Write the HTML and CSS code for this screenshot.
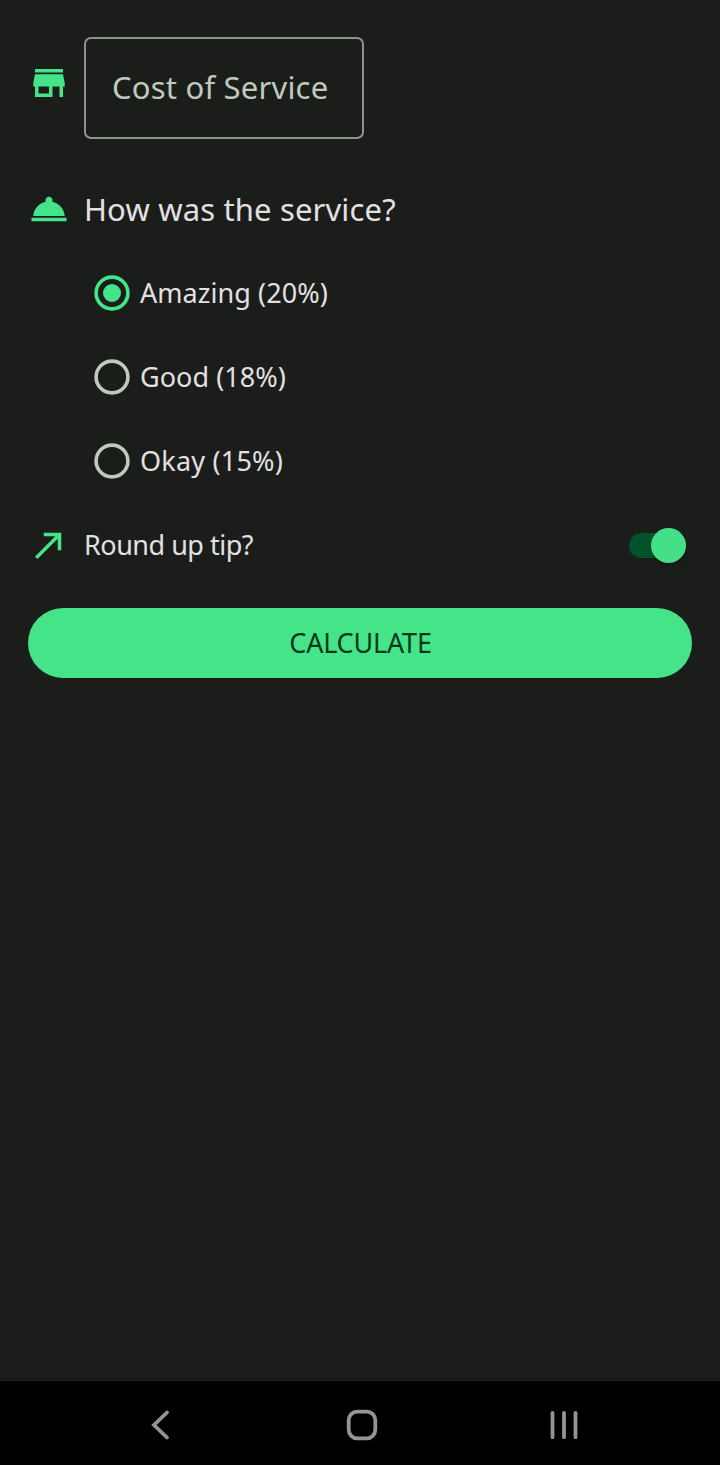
FILE: index.html
```
<!DOCTYPE html>
<html lang="en">
<head>
<meta charset="utf-8">
<title>Tip Calculator</title>
<link rel="stylesheet" href="styles.css">
</head>
<body>
<main class="form">
  <div class="row cost">
    <svg class="icon store" viewBox="0 0 24 24"><path d="M20 4H4v2h16V4zm1 10v-2l-1-5H4l-1 5v2h1v6h10v-6h4v6h2v-6h1zm-9 4H6v-4h6v4z"/></svg>
    <div class="field"><span class="hint">Cost of Service</span></div>
  </div>
  <div class="row question">
    <svg class="icon" viewBox="0 0 24 24"><path d="M2 17h20v2H2zm11.84-9.21c.1-.24.16-.51.16-.79 0-1.1-.9-2-2-2s-2 .9-2 2c0 .28.06.55.16.79C6.25 8.6 3.27 11.93 3 16h18c-.27-4.07-3.25-7.4-7.16-8.21z"/></svg>
    <span class="title">How was the service?</span>
  </div>
  <div class="options">
    <div class="option">
      <svg class="radio checked" viewBox="0 0 36 36"><circle class="ring" cx="18" cy="18" r="15.900"/><circle class="dot" cx="18" cy="18" r="9"/></svg>
      <span class="label">Amazing (20%)</span>
    </div>
    <div class="option">
      <svg class="radio" viewBox="0 0 36 36"><circle class="ring" cx="18" cy="18" r="15.900"/></svg>
      <span class="label">Good (18%)</span>
    </div>
    <div class="option">
      <svg class="radio" viewBox="0 0 36 36"><circle class="ring" cx="18" cy="18" r="15.900"/></svg>
      <span class="label okay">Okay (15%)</span>
    </div>
  </div>
  <div class="row round">
    <svg class="icon" viewBox="0 0 24 24"><path d="M9 5v2h6.59L4 18.59 5.41 20 17 8.41V15h2V5z"/></svg>
    <span class="label tip">Round up tip?</span>
    <span class="switch"><span class="thumb"></span></span>
  </div>
  <div class="button"><span class="caption">CALCULATE</span></div>
</main>
<nav class="navbar">
  <svg class="back" viewBox="0 0 24 36"><path d="M18 5.500 5 18 18 30.500"/></svg>
  <svg class="home" viewBox="0 0 36 36"><rect x="4.700" y="4.700" width="26.600" height="26.600" rx="8.500"/></svg>
  <svg class="recents" viewBox="0 0 36 36"><path d="M6.500 5.800v24.400M18 5.800v24.400M29.500 5.800v24.400"/></svg>
</nav>
</body>
</html>
```

FILE: styles.css
```
* { box-sizing: border-box; }
body {
  margin: 0;
  min-height: 1465px;
  display: flex;
  flex-direction: column;
  background: #1b1d1a;
  color: #e3e0e3;
  font-family: "Noto Sans", sans-serif;
}
.form { flex: 1; padding: 37px 28px 0; }
.row { display: flex; align-items: center; gap: 14px; }
.icon { width: 42px; height: 42px; flex: none; fill: #45e489; }
.cost { height: 102px; align-items: flex-start; }
.store { margin-top: 25px; }
.field {
  width: 280px;
  height: 102px;
  display: flex;
  align-items: center;
  padding: 0 0 2px 26px;
  border: 2px solid #8b938a;
  border-radius: 7px;
}
.hint, .title, .label, .caption { white-space: nowrap; line-height: 42px; }
.hint { color: #c0c9be; font-size: 31px; letter-spacing: .2px; }
.question { height: 42px; margin-top: 49px; }
.title { font-size: 31px; letter-spacing: .15px; }
.options { margin: 21px 0 0 66px; }
.option { height: 84px; display: flex; align-items: center; gap: 10px; }
.radio { width: 36px; height: 36px; flex: none; }
.ring { fill: none; stroke: #c0c9be; stroke-width: 3.6; }
.checked .ring { stroke: #45e489; }
.dot { fill: #45e489; }
.label { font-size: 27px; letter-spacing: .05px; }
.okay { letter-spacing: .2px; }
.tip { letter-spacing: -.5px; }
.round { height: 84px; }
.switch {
  width: 57px;
  height: 25px;
  display: flex;
  align-items: center;
  justify-content: flex-end;
  margin: 0 6px 0 auto;
  border-radius: 13px;
  background: #00532a;
}
.thumb {
  width: 35px;
  height: 35px;
  flex: none;
  border-radius: 50%;
  background: #45df87;
  box-shadow: 0 2px 3px rgba(0, 0, 0, .25);
}
.button {
  height: 70px;
  margin-top: 21px;
  display: flex;
  align-items: center;
  justify-content: center;
  border-radius: 35px;
  background: #45e489;
  color: #003919;
}
.caption { padding-left: 1px; font-size: 27px; letter-spacing: -.2px; }
.navbar {
  height: 84px;
  display: flex;
  align-items: center;
  padding: 4px 138px 0 149px;
  background: #000;
}
.navbar svg { height: 36px; fill: none; stroke: #949494; stroke-width: 3.8; stroke-linecap: round; }
.back { width: 24px; margin-right: 171px; }
.home, .recents { width: 36px; }
.recents { margin-left: 166px; }
```
